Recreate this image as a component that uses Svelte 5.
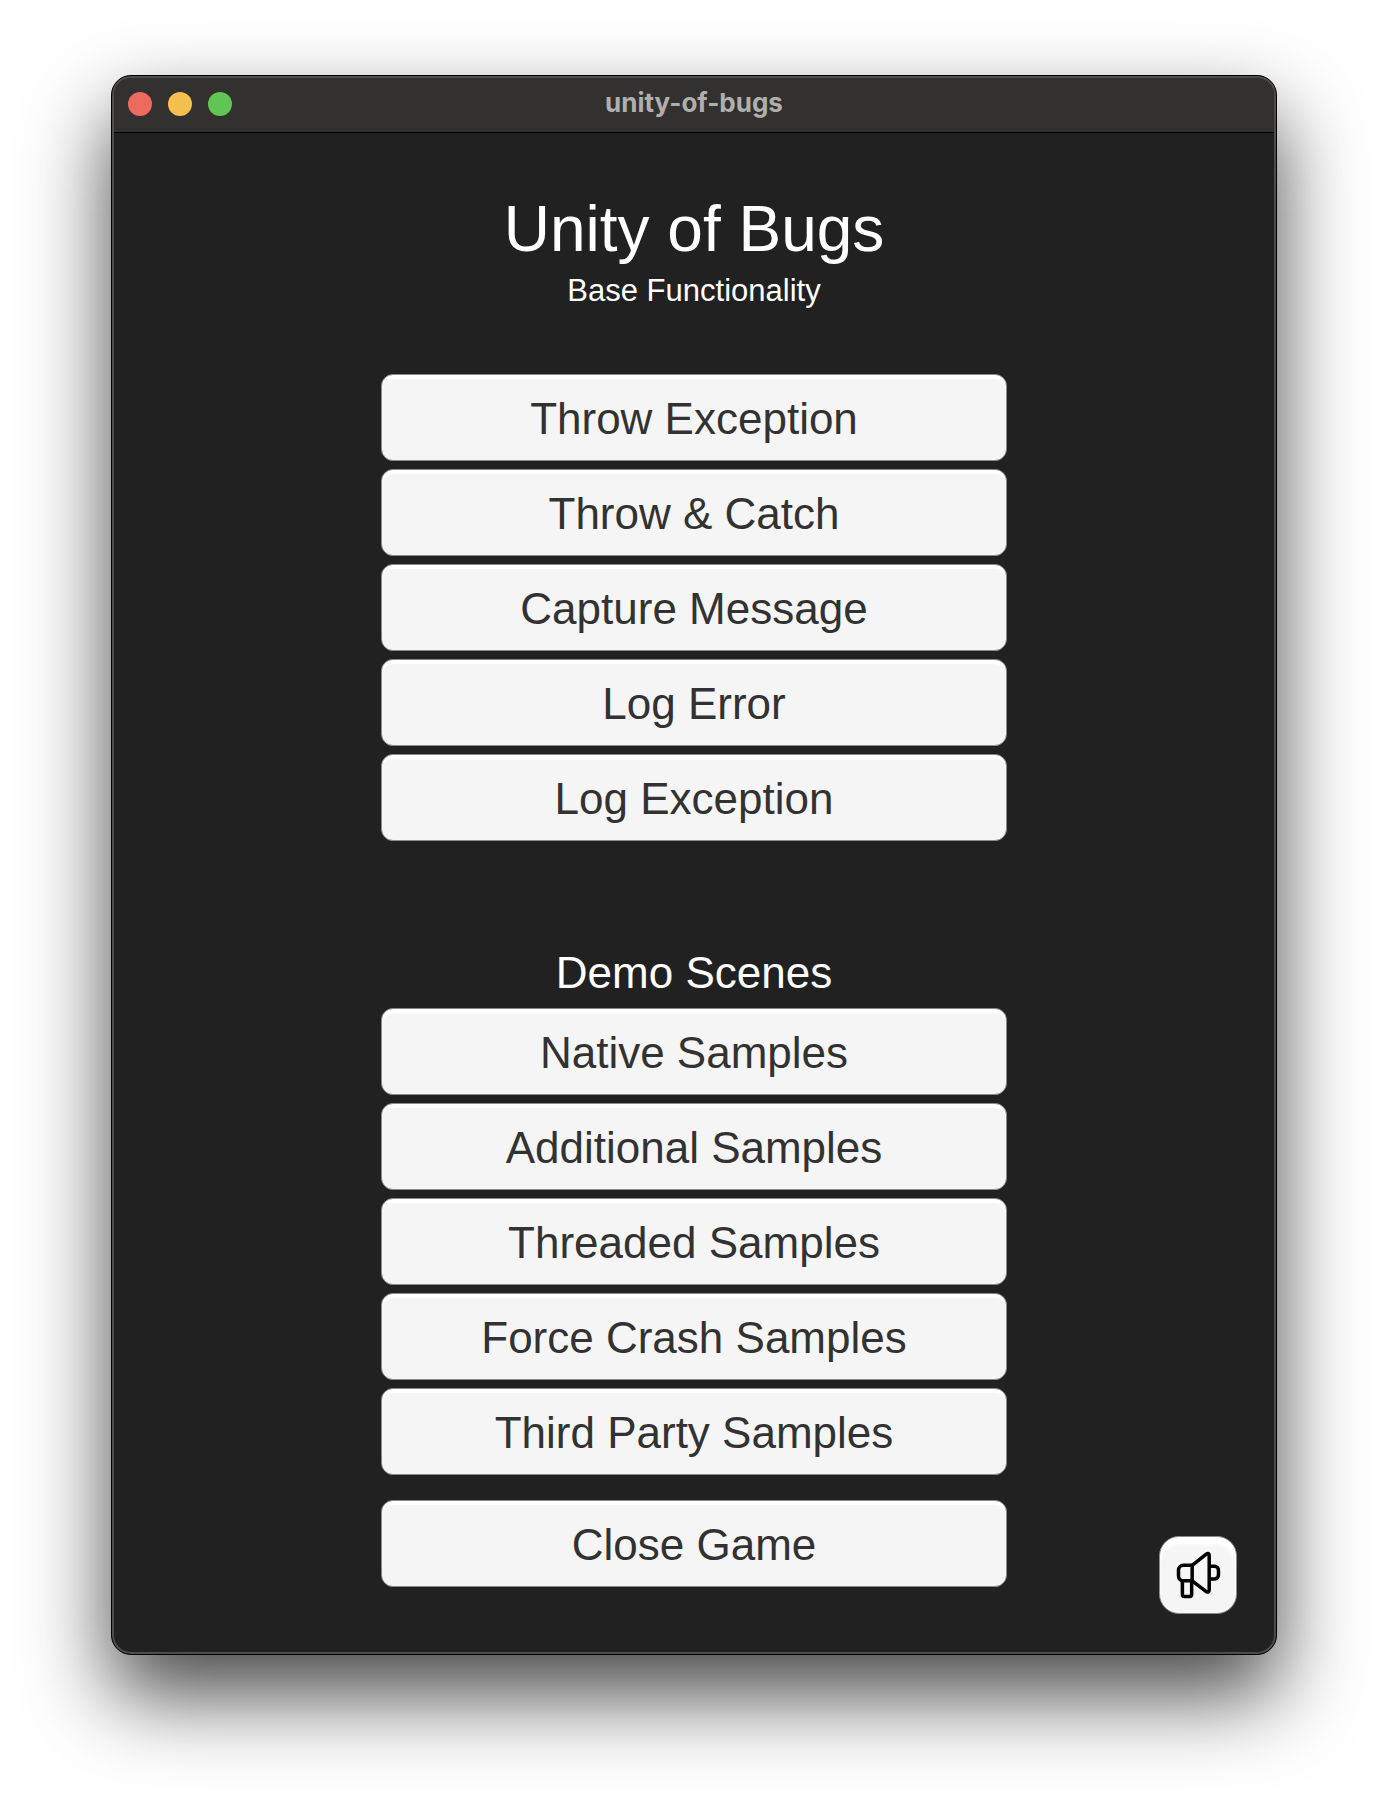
<script>
  const functionality = ['Throw Exception', 'Throw & Catch', 'Capture Message', 'Log Error', 'Log Exception'];
  const scenes = [
    'Native Samples',
    'Additional Samples',
    'Threaded Samples',
    'Force Crash Samples',
    'Third Party Samples'
  ];
</script>

<div class="desktop">
  <main class="window">
    <header class="titlebar">
      <div class="lights">
        <button class="light close" aria-label="Close window"></button>
        <button class="light minimize" aria-label="Minimize window"></button>
        <button class="light zoom" aria-label="Zoom window"></button>
      </div>
      <div class="caption">unity-of-bugs</div>
    </header>

    <div class="game">
      <div class="menu">
        <h1>Unity of Bugs</h1>
        <p class="subtitle">Base Functionality</p>
        <div class="group">
          {#each functionality as label}
            <button class="action">{label}</button>
          {/each}
        </div>
        <h2>Demo Scenes</h2>
        <div class="group">
          {#each scenes as label}
            <button class="action">{label}</button>
          {/each}
        </div>
        <button class="action quit">Close Game</button>
      </div>

      <button class="feedback" aria-label="Send feedback">
        <svg viewBox="0 0 78 78" aria-hidden="true">
          <path d="M33 29h-9a5 5 0 0 0-5 5v6a5 5 0 0 0 5 5h9z" />
          <path d="M23 45v14a2 2 0 0 0 2 2h5.500a2 2 0 0 0 2-2V45" />
          <path d="M33 29l14.500-11.500q3-1.500 3 1.500v35.500q0 3-3 1.500L33 45" />
          <path d="M51 30h5a4 4 0 0 1 4 4v5a4 4 0 0 1-4 4h-5" />
        </svg>
      </button>
    </div>
  </main>
</div>

<style>
  :global(body) {
    margin: 0;
    background: #fff;
  }

  .desktop {
    box-sizing: border-box;
    min-height: 100vh;
    padding: 75px 111px 147px;
    display: flex;
    overflow: hidden;
    font-family: 'Liberation Sans', Arial, sans-serif;
  }

  .window {
    box-sizing: border-box;
    flex: 1;
    display: flex;
    flex-direction: column;
    border: 1px solid #000;
    border-radius: 20px;
    background: #212121;
    box-shadow:
      inset 0 0 0 2px #4d4d4d,
      inset 0 2px 0 #6b6a68,
      0 40px 84px rgba(0, 0, 0, 0.72);
  }

  .titlebar {
    display: grid;
    grid-template-columns: 1fr auto 1fr;
    align-items: center;
    height: 52px;
    margin: 2px 2px 0;
    padding: 0 14px 2px;
    border-bottom: 1px solid #000;
    border-radius: 18px 18px 0 0;
    background: #32312f;
  }

  .lights {
    display: flex;
    gap: 16px;
  }

  .light {
    width: 24px;
    height: 24px;
    padding: 0;
    border: 0;
    border-radius: 50%;
  }

  .close {
    background: #ed6a5e;
  }

  .minimize {
    background: #f5bf4f;
  }

  .zoom {
    background: #61c554;
  }

  .caption {
    padding-bottom: 2px;
    color: #b0afad;
    font: 700 26px/32px Inter, sans-serif;
  }

  .game {
    flex: 1;
    display: grid;
    grid-template-columns: 1fr minmax(0, 626px) 1fr;
    padding: 60px 39px 0;
  }

  .menu {
    grid-column: 2;
    display: flex;
    flex-direction: column;
    text-align: center;
  }

  h1,
  h2,
  .subtitle {
    margin: 0;
    color: #fff;
    font-weight: 400;
  }

  h1 {
    font-size: 64px;
    line-height: 73px;
  }

  .subtitle {
    margin-top: 7px;
    font-size: 31px;
    line-height: 36px;
  }

  .group {
    display: flex;
    flex-direction: column;
    gap: 8px;
  }

  .subtitle + .group {
    margin-top: 65px;
  }

  h2 {
    margin-top: 107px;
    margin-bottom: 10px;
    font-size: 44px;
    line-height: 50px;
  }

  .action {
    height: 87px;
    padding: 2px 0 0;
    border: 1px solid #8a8a8a;
    border-radius: 12px;
    background: #f5f5f5;
    box-shadow: inset 0 4px 1px #fff;
    color: #323232;
    font: 400 44px/50px 'Liberation Sans', Arial, sans-serif;
  }

  .quit {
    margin-top: 25px;
  }

  .feedback {
    align-self: end;
    justify-self: end;
    width: 78px;
    height: 78px;
    margin-bottom: 40px;
    padding: 0;
    border: 1px solid #8a8a8a;
    border-radius: 20px;
    background: #f5f5f5;
    box-shadow: inset 0 8px 4px #fff;
  }

  .feedback svg {
    display: block;
    width: 100%;
    height: 100%;
    fill: none;
    stroke: #000;
    stroke-width: 3.6;
    stroke-linejoin: round;
  }
</style>
